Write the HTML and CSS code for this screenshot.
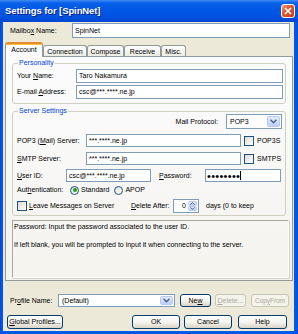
FILE: index.html
```html
<!DOCTYPE html>
<html lang="en">
<head>
  <meta charset="UTF-8" />
  <title>Settings for [SpinNet]</title>
  <link rel="stylesheet" href="styles.css">
</head>
<body>
  <div class="window">
    <div class="titlebar">
      <span class="title">Settings for [SpinNet]</span>
      <span class="close">
        <svg width="14" height="14" viewBox="0 0 14 14">
          <defs>
            <linearGradient id="cg" x1="0" y1="0" x2="1" y2="1">
              <stop offset="0" stop-color="#f0a080"/>
              <stop offset="0.4" stop-color="#e0592f"/>
              <stop offset="1" stop-color="#c23a12"/>
            </linearGradient>
          </defs>
          <rect x="0.5" y="0.5" width="13" height="13" rx="2.5" fill="url(#cg)" stroke="#fff"/>
          <path d="M4 4l6 6M10 4l-6 6" stroke="#fff" stroke-width="1.7"/>
        </svg>
      </span>
    </div>

    <div class="frame">
      <div class="client">
        <div class="row mailbox">
          <span class="lbl">Mailbo<u>x</u> Name:</span>
          <div class="field w-mailbox">SpinNet</div>
        </div>

        <div class="tabs">
          <div class="tab active t-account">Account</div>
          <div class="tab t-conn">Connection</div>
          <div class="tab t-compose">Compose</div>
          <div class="tab t-receive">Receive</div>
          <div class="tab t-misc">Misc.</div>
        </div>

        <div class="panel">
          <fieldset class="group personality">
            <legend>Personality</legend>
            <div class="row prow first">
              <span class="lbl w-plabel">Your <u>N</u>ame:</span>
              <div class="field w-pinput">Taro Nakamura</div>
            </div>
            <div class="row prow">
              <span class="lbl w-plabel">E-mail <u>A</u>ddress:</span>
              <div class="field w-pinput">csc@***.****.ne.jp</div>
            </div>
          </fieldset>

          <fieldset class="group server">
            <legend>Server Settings</legend>
            <div class="row protocol">
              <span class="lbl">Mail Protocol:</span>
              <div class="combo w-proto">
                <span class="val">POP3</span>
                <span class="arrow">
                  <svg width="7" height="5" viewBox="0 0 7 5"><path d="M0.5 0.8L3.5 3.8L6.5 0.8" fill="none" stroke="#4d6185" stroke-width="1.5"/></svg>
                </span>
              </div>
            </div>
            <div class="row srow r-pop">
              <span class="lbl w-slabel"><span>POP3 (<u>M</u>ail) Server:</span></span>
              <div class="field w-server">***.****.ne.jp</div>
              <span class="check"></span>
              <span class="chk-text">POP3S</span>
            </div>
            <div class="row srow r-smtp">
              <span class="lbl w-slabel"><span><u>S</u>MTP Server:</span></span>
              <div class="field w-server">***.****.ne.jp</div>
              <span class="check"></span>
              <span class="chk-text">SMTPS</span>
            </div>
            <div class="row srow r-user">
              <span class="lbl w-ulabel"><u>U</u>ser ID:</span>
              <div class="field w-user">csc@***.****.ne.jp</div>
              <span class="lbl w-pwlabel"><u>P</u>assword:</span>
              <div class="field w-pw focus"><span class="dots">&bull;&bull;&bull;&bull;&bull;&bull;&bull;&bull;</span><span class="caret"></span></div>
            </div>
            <div class="row r-auth">
              <span class="lbl w-alabel">Aut<u>h</u>entication:</span>
              <span class="radio on"></span>
              <span class="radio-text">Standard</span>
              <span class="radio r-apop"></span>
              <span class="radio-text">APOP</span>
            </div>
            <div class="row r-leave">
              <span class="check"></span>
              <span class="leave-text"><u>L</u>eave Messages on Server</span>
              <span class="lbl w-dlabel"><u>D</u>elete After:</span>
              <div class="field spin">
                <span class="spin-val">0</span>
                <span class="spin-btns">
                  <span class="spin-btn"><svg width="5" height="3" viewBox="0 0 5 3"><path d="M0.5 2.6L2.5 0.6L4.5 2.6" fill="none" stroke="#4d6185" stroke-width="1"/></svg></span>
                  <span class="spin-btn"><svg width="5" height="3" viewBox="0 0 5 3"><path d="M0.5 0.4L2.5 2.4L4.5 0.4" fill="none" stroke="#4d6185" stroke-width="1"/></svg></span>
                </span>
              </div>
              <span class="days">days (0 to keep</span>
            </div>
          </fieldset>

          <div class="desc">
            <p>Password: Input the password associated to the user ID.</p>
            <p class="second">If left blank, you will be prompted to input it when connecting to the server.</p>
          </div>
        </div>

        <div class="row profile">
          <span class="lbl w-prof">Pr<u>o</u>file Name:</span>
          <div class="combo w-profsel">
            <span class="val">(Default)</span>
            <span class="arrow">
              <svg width="7" height="5" viewBox="0 0 7 5"><path d="M0.5 0.8L3.5 3.8L6.5 0.8" fill="none" stroke="#4d6185" stroke-width="1.5"/></svg>
            </span>
          </div>
          <div class="btn b-new">Ne<u>w</u></div>
          <div class="btn disabled b-del"><u>D</u>elete...</div>
          <div class="btn disabled b-copy">Cop<u>y</u> From</div>
        </div>

        <div class="row buttons">
          <div class="btn b-global"><u>G</u>lobal Profiles...</div>
          <div class="btn b-ok">OK</div>
          <div class="btn b-cancel">Cancel</div>
          <div class="btn b-help">Help</div>
        </div>
      </div>
    </div>
  </div>
</body>
</html>
```

FILE: styles.css
```css
* {
  box-sizing: border-box;
}
body {
  margin: 0;
  font-family: "Liberation Sans", Arial, sans-serif;
  font-size: 7px;
  line-height: 8px;
  color: #000;
}
u {
  text-decoration: underline;
}

/* window chrome */
.window {
  width: 298px;
  height: 334px;
  display: flex;
  flex-direction: column;
  background: #0054e3;
}
.titlebar {
  height: 22px;
  flex: none;
  display: flex;
  align-items: center;
  padding: 0 3px 0 5px;
  background: linear-gradient(#3d8cf7 0, #0a60e8 3px, #0058e6 9px, #0054e0 16px, #0047d3 22px);
}
.title {
  color: #fff;
  font-weight: bold;
  font-size: 9.5px;
  letter-spacing: -0.1px;
  text-shadow: 1px 1px 0 #0a1a80;
}
.close {
  margin-left: auto;
  width: 14px;
  height: 14px;
  display: flex;
}
.frame {
  flex: 1;
  padding: 0 4px 3px 3px;
  background: linear-gradient(90deg, #0831d9 0, #0058e6 1px, #0058e6 calc(100% - 1px), #0831d9 100%);
}
.client {
  height: 100%;
  background: #ece9d8;
  padding-top: 1px;
}

/* generic */
.row {
  display: flex;
  align-items: center;
}
.lbl {
  flex: none;
  white-space: nowrap;
}
.field {
  flex: none;
  height: 100%;
  border: 1px solid #7f9db9;
  background: #fff;
  padding-left: 2px;
  display: flex;
  align-items: center;
  white-space: nowrap;
  overflow: hidden;
}
.combo {
  flex: none;
  height: 100%;
  display: flex;
  border: 1px solid #7f9db9;
  background: #fff;
}
.combo .val {
  flex: 1;
  display: flex;
  align-items: center;
  padding-left: 3px;
}
.combo .arrow {
  width: 13px;
  margin: 1px;
  border: 1px solid #b8c9f3;
  border-radius: 2px;
  background: linear-gradient(#e4ecfd, #bccff9);
  display: flex;
  align-items: center;
  justify-content: center;
}
.check {
  flex: none;
  width: 10px;
  height: 10px;
  border: 1px solid #1c5180;
  background: linear-gradient(135deg, #dcdbd2, #fff);
}
.radio {
  flex: none;
  width: 9px;
  height: 9px;
  border: 1px solid #1c5180;
  border-radius: 50%;
  background: linear-gradient(135deg, #dcdbd2, #fff);
  display: flex;
  align-items: center;
  justify-content: center;
}
.radio.on::after {
  content: "";
  width: 4px;
  height: 4px;
  border-radius: 50%;
  background: #21a121;
}
.btn {
  flex: none;
  height: 100%;
  border: 1px solid #003c74;
  border-radius: 3px;
  background: linear-gradient(#fff, #f3f2ec 55%, #d8d3c6);
  display: flex;
  align-items: center;
  justify-content: center;
  white-space: nowrap;
}
.btn.disabled {
  border-color: #c9c7ba;
  background: #f5f4ea;
  color: #aca899;
}

/* mailbox name */
.mailbox {
  height: 15px;
  padding-left: 7px;
}
.mailbox .lbl {
  width: 62px;
}
.w-mailbox {
  width: 218px;
}

/* tabs */
.tabs {
  display: flex;
  align-items: flex-end;
  height: 14px;
  margin: 4px 0 0 2px;
}
.tab {
  height: 11px;
  border: 1px solid #919b9c;
  border-bottom: 0;
  border-radius: 3px 3px 0 0;
  background: linear-gradient(#fff, #ecebe5);
  display: flex;
  align-items: center;
  justify-content: center;
  padding-top: 1px;
}
.tab.active {
  height: 15px;
  margin-bottom: -1px;
  background: #fcfcfe;
  border-top: 2px solid #e68b2c;
  box-shadow: inset 0 1px #ffc83c;
  position: relative;
  z-index: 1;
  padding-top: 0;
  padding-bottom: 2px;
}
.t-account { width: 38px; }
.t-conn { width: 44px; }
.t-compose { width: 37px; }
.t-receive { width: 37px; }
.t-misc { width: 25px; }

/* tab panel */
.panel {
  width: 288px;
  height: 225px;
  margin-left: 2px;
  border: 1px solid #919b9c;
  background: linear-gradient(#fcfcfe, #f4f3ee);
  padding-left: 6px;
}
fieldset.group {
  margin: 0;
  padding: 0 3px 0 4px;
  min-width: 0;
  width: 274px;
  border: 1px solid #d0d0bf;
  border-radius: 3px;
}
fieldset.group legend {
  padding: 0 1px;
  margin-left: 1px;
  color: #0046d5;
  line-height: 8px;
}
.personality {
  margin-top: 2px !important;
  padding-bottom: 4px !important;
}
.prow {
  height: 14px;
  margin-top: 2px;
}
.w-plabel { width: 59px; }
.w-pinput { width: 207px; }

.server {
  margin-top: 3px !important;
  padding-bottom: 2px !important;
}
.protocol {
  height: 15px;
  margin-top: -1px;
  justify-content: flex-end;
}
.protocol .lbl {
  margin-right: 8px;
}
.w-proto { width: 56px; }
.srow {
  height: 13px;
  margin-top: 5px;
}
.r-user {
  margin-top: 4px;
}
.w-slabel { width: 69px; }
.w-server { width: 155px; }
.srow .check {
  margin-left: 3px;
}
.chk-text {
  margin-left: 3px;
}
.w-ulabel { width: 49px; }
.w-user { width: 85px; }
.w-pwlabel {
  width: 46px;
  margin-left: 8px;
}
.w-pw {
  width: 76px;
  padding-left: 1px;
}
.dots {
  font-size: 11px;
  letter-spacing: 0.3px;
  line-height: 8px;
}
.caret {
  width: 1px;
  height: 9px;
  background: #000;
}
.r-auth {
  height: 12px;
  margin-top: 2px;
}
.w-alabel { width: 53px; }
.radio-text {
  margin-left: 2px;
}
.r-apop {
  margin-left: 5px;
}
.r-leave {
  height: 14px;
  margin-top: 3px;
}
.leave-text {
  width: 102px;
  margin-left: 2px;
  white-space: nowrap;
}
.w-dlabel { width: 42px; }
.spin {
  width: 26px;
  padding-left: 0;
}
.spin-val {
  flex: 1;
  text-align: right;
  padding-right: 2px;
}
.spin-btns {
  width: 10px;
  height: 100%;
  display: flex;
  flex-direction: column;
  padding: 1px 1px 1px 0;
}
.spin-btn {
  flex: 1;
  border: 1px solid #b8c9f3;
  border-radius: 2px;
  background: linear-gradient(#e4ecfd, #bccff9);
  display: flex;
  align-items: center;
  justify-content: center;
}
.days {
  margin-left: 7px;
  white-space: nowrap;
}

/* description */
.desc {
  width: 277px;
  height: 58px;
  margin-top: 4px;
  border-top: 1px solid #aca899;
  border-left: 1px solid #aca899;
  border-right: 1px solid #fff;
  border-bottom: 1px solid #fff;
  box-shadow: 1px 1px 0 #d4d0c8;
  padding: 2px 0 0 1px;
  white-space: nowrap;
  overflow: hidden;
}
.desc p {
  margin: 0;
}
.desc .second {
  margin-top: 10px;
}

/* profile + bottom buttons */
.profile {
  height: 13px;
  margin-top: 13px;
  padding-left: 7px;
}
.w-prof { width: 48px; }
.w-profsel { width: 117px; }
.b-new {
  width: 31px;
  margin-left: 5px;
}
.b-del {
  width: 31px;
  margin-left: 4px;
}
.b-copy {
  width: 38px;
  margin-left: 5px;
  font-size: 6.6px;
  letter-spacing: -0.1px;
  overflow: hidden;
}
.buttons {
  height: 14px;
  margin-top: 8px;
  padding-left: 4px;
}
.b-global { width: 56px; }
.b-ok {
  width: 48px;
  margin-left: 69px;
}
.b-cancel {
  width: 48px;
  margin-left: 4px;
}
.b-help {
  width: 49px;
  margin-left: 6px;
}
```
